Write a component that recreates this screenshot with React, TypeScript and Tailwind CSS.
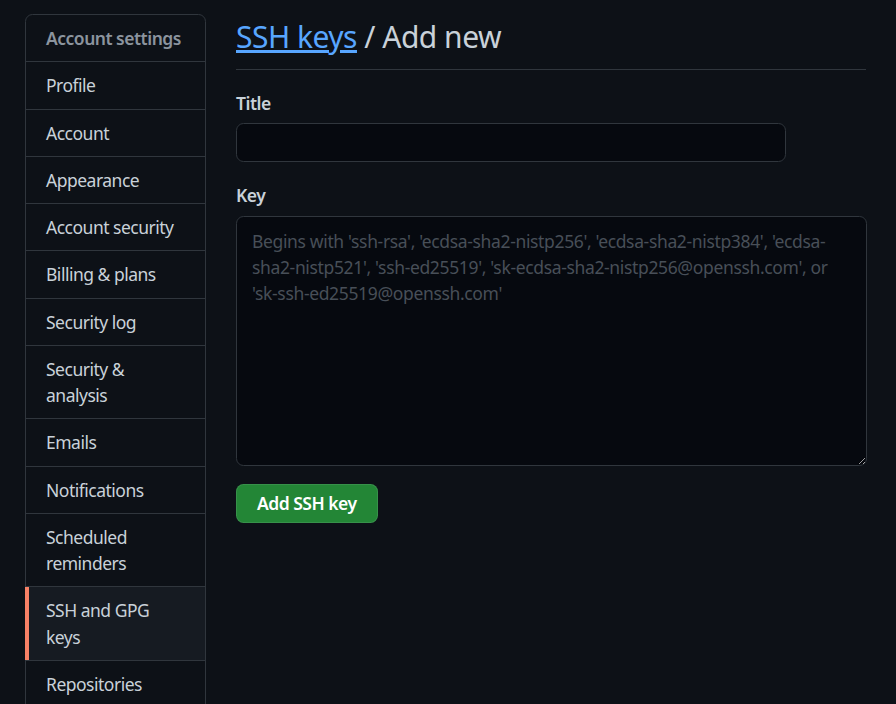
import React from "react";

const menu: { label: string; selected?: boolean }[] = [
    { label: "Profile" },
    { label: "Account" },
    { label: "Appearance" },
    { label: "Account security" },
    { label: "Billing & plans" },
    { label: "Security log" },
    { label: "Security & analysis" },
    { label: "Emails" },
    { label: "Notifications" },
    { label: "Scheduled reminders" },
    { label: "SSH and GPG keys", selected: true },
    { label: "Repositories" },
];

export default function App() {
    const [title, setTitle] = React.useState("");
    const [key, setKey] = React.useState("");

    return (
        <div className="bg-[#0d1117] text-[#c9d1d9] font-['Noto_Sans',sans-serif] text-[17.5px] leading-[26.25px] tracking-[-0.5px] flex gap-[30px] pl-[25px] pt-[14px] overflow-hidden h-[704px]">
            <nav className="w-[181px] shrink-0 border border-[#30363d] rounded-t-[7.5px] self-start">
                <div className="px-[20px] py-[10px] font-semibold text-[#8b949e] border-b border-[#30363d] whitespace-nowrap">
                    Account settings
                </div>
                {menu.map((item, key) => (
                    <div
                        key={key}
                        className={`relative px-[20px] py-[10px] border-b border-[#30363d] ${item.selected ? "bg-[#161b22]" : ""}`}
                    >
                        {item.selected && <span className="absolute -left-px top-0 bottom-0 w-[4px] bg-[#f78166]" />}
                        {item.label}
                    </div>
                ))}
            </nav>

            <main className="w-[630px]">
                <div className="border-b border-[#30363d] pb-[10px]">
                    <h2 className="text-[30px] leading-[45px] font-normal">
                        <a href="#" className="text-[#58a6ff] underline">SSH keys</a> / Add new
                    </h2>
                </div>

                <form className="mt-[20px]" onSubmit={e => e.preventDefault()}>
                    <label className="block font-semibold mb-[7px]">Title</label>
                    <input
                        value={title}
                        onChange={e => setTitle(e.target.value)}
                        className="block w-[550px] h-[39px] bg-[#06090f] border border-[#30363d] rounded-[7.5px] px-[15px] outline-none"
                    />

                    <label className="block font-semibold mt-[20px] mb-[7px]">Key</label>
                    <textarea
                        value={key}
                        onChange={e => setKey(e.target.value)}
                        placeholder="Begins with 'ssh-rsa', 'ecdsa-sha2-nistp256', 'ecdsa-sha2-nistp384', 'ecdsa-sha2-nistp521', 'ssh-ed25519', 'sk-ecdsa-sha2-nistp256@openssh.com', or 'sk-ssh-ed25519@openssh.com'"
                        className="block w-[631px] h-[250px] bg-[#06090f] border border-[#30363d] rounded-[7.5px] px-[15px] py-[11px] outline-none placeholder:text-[#484f58] leading-[26px] tracking-[-0.35px]"
                    />

                    <button
                        type="submit"
                        className="mt-[18px] h-[39px] px-[20px] bg-[#238636] border border-[#f0f6fc1a] rounded-[7.5px] text-white font-semibold"
                    >
                        Add SSH key
                    </button>
                </form>
            </main>
        </div>
    );
}
